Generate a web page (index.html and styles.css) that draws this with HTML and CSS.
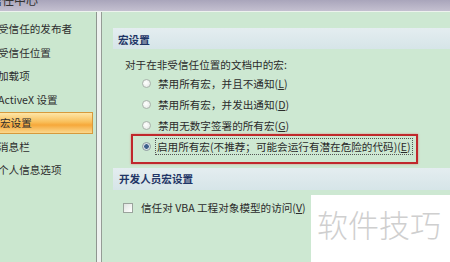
FILE: index.html
```html
<!DOCTYPE html>
<html lang="zh-CN">
<head>
    <meta charset="UTF-8">
    <meta name="viewport" content="width=device-width, initial-scale=1.0">
    <title>信任中心</title>
    <link rel="stylesheet" href="styles.css">
</head>
<body>

<div class="titlebar"><span>信任中心</span></div>

<div class="window">
    <!-- левое меню -->
    <ul class="nav">
        <li>受信任的发布者</li>
        <li>受信任位置</li>
        <li>加载项</li>
        <li>ActiveX 设置</li>
        <li class="active">宏设置</li>
        <li>消息栏</li>
        <li>个人信息选项</li>
    </ul>

    <div class="content">
        <div class="section-head">宏设置</div>
        <p class="intro">对于在非受信任位置的文档中的宏:</p>

        <div class="options">
            <div class="option"><span class="radio"></span><span class="label">禁用所有宏，并且不通知(<u>L</u>)</span></div>
            <div class="option"><span class="radio"></span><span class="label">禁用所有宏，并发出通知(<u>D</u>)</span></div>
            <div class="option"><span class="radio"></span><span class="label">禁用无数字签署的所有宏(<u>G</u>)</span></div>
            <div class="option selected"><span class="radio"></span><span class="label">启用所有宏(不推荐；可能会运行有潜在危险的代码)(<u>E</u>)</span></div>
        </div>

        <div class="section-head second">开发人员宏设置</div>
        <div class="check-row"><span class="checkbox"></span><span>信任对 VBA 工程对象模型的访问(<u>V</u>)</span></div>

        <div class="watermark">软件技巧</div>
    </div>
</div>

</body>
</html>
```

FILE: styles.css
```css
/* Диалог "Центр управления безопасностью" */
body {
    margin: 0;
    width: 450px;
    height: 262px;
    overflow: hidden;
    font-family: "Noto Sans CJK SC", "Liberation Sans", sans-serif;
    font-size: 10.6px;
    color: #2b2b2b;
    background-color: #cde8d2;
}
.titlebar {
    height: 11px;
    overflow: hidden;
    background: linear-gradient(to bottom, #a9a5bb, #c4c0d0);
}
.titlebar span {
    display: block;
    margin-top: -9px;
    margin-left: -10px;
    font-size: 12px;
    color: #333;
}
.window {
    display: flex;
    height: 250px;
    border-top: 1px solid #edf3ee;
    background-color: #eef2ef;
}
.nav {
    list-style: none;
    margin: 0;
    padding: 5px 0 0 0;
    width: 96px;
    background-color: #cbe7cf;
    border-right: 1px solid #8f9690;
}
.nav li {
    height: 23.5px;
    line-height: 23.5px;
    margin-right: 3px;
    margin-left: -2px;
    white-space: nowrap;
    color: #2e2e2e;
}
.nav li.active {
    height: 20px;
    line-height: 20px;
    margin-top: 0.75px;
    margin-bottom: 0.75px;
    padding-left: 2px;
    background: linear-gradient(to bottom, #fde6a8, #f9bf5a 45%, #f6a83a 60%, #fbd88e);
    border: 1px solid #d79a3c;
    border-left: none;
}
.content {
    position: relative;
    flex: 1;
    margin-left: 4px;
    border-left: 1px solid #959c96;
    background-color: #cde8d2;
    padding-left: 11px;
}
.section-head {
    margin-top: 16px;
    height: 21px;
    line-height: 23px;
    padding-left: 5px;
    font-weight: bold;
    color: #1f3566;
    background: linear-gradient(to bottom, #e4edf0, #d6e5e8);
}
.section-head.second {
    margin-top: 10.5px;
    height: 22px;
    line-height: 22px;
    padding-left: 6px;
}
.intro {
    margin: 8px 0 0 12px;
    height: 16px;
    line-height: 16px;
}
.option {
    position: relative;
    display: flex;
    align-items: center;
    gap: 7px;
    height: 21px;
    padding-left: 29px;
}
.radio {
    width: 9px;
    height: 9px;
    box-sizing: border-box;
    border-radius: 50%;
    border: 1px solid #aab3ac;
    background: radial-gradient(circle at 40% 40%, #ffffff, #dfe5e0);
}
.option.selected .radio {
    background: radial-gradient(circle, #3f5f8c 0 2px, #c9d6de 2.5px, #f4f6f5 4px);
    border-color: #8e9aa0;
}
.option.selected .label {
    outline: 1px dotted #555;
    padding: 0 1px;
    margin-left: -2px;
}
.option.selected::after {
    content: "";
    position: absolute;
    left: 18px;
    top: -2px;
    width: 287px;
    height: 30px;
    box-sizing: border-box;
    border: 2px solid #c0282c;
    box-shadow: 0 0 2px rgba(220, 80, 80, 0.6);
}
.check-row {
    display: flex;
    align-items: center;
    gap: 8px;
    height: 20px;
    margin-top: 8px;
    padding-left: 10px;
}
.checkbox {
    width: 10px;
    height: 10px;
    box-sizing: border-box;
    border: 1px solid #9aa39c;
    background: linear-gradient(to bottom right, #dfe4e0, #ffffff);
}
.watermark {
    position: absolute;
    left: 209px;
    top: 183px;
    right: 0;
    bottom: 0;
    background-color: #ffffff;
    padding-left: 6px;
    font-size: 31px;
    font-weight: 300;
    line-height: 58px;
    color: #cfcfcf;
    white-space: nowrap;
}
```
